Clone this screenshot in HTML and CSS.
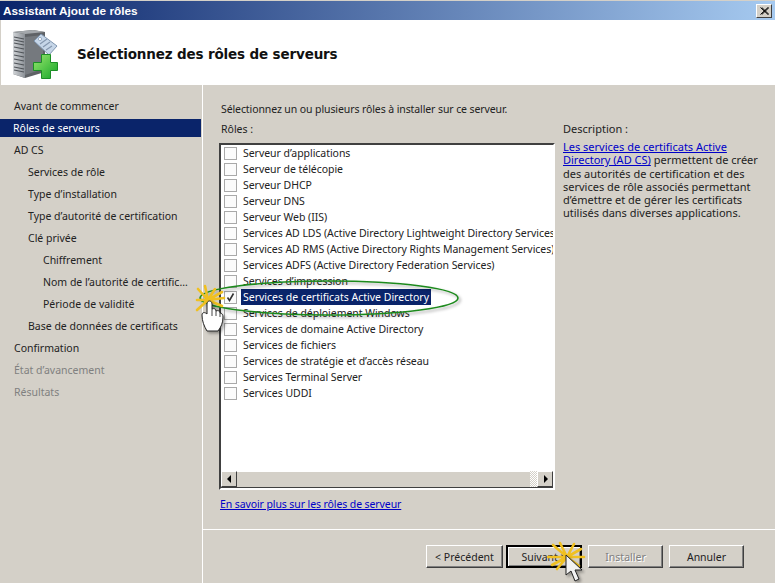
FILE: index.html
```html
<!DOCTYPE html>
<html lang="fr">
<head>
<meta charset="utf-8">
<title>Assistant Ajout de rôles</title>
<link rel="stylesheet" href="styles.css">
</head>
<body>
<div class="window">
  <div class="titlebar">
    <span class="title">Assistant Ajout de rôles</span>
    <span class="close"><svg width="9" height="8" viewBox="0 0 9 8"><path d="M0.5 0.5L8 7.5M1.8 0.5L9 7.5M8 0.5L0.5 7.5M9 0.5L1.8 7.5" stroke="#000" stroke-width="1" fill="none"/></svg></span>
  </div>
  <header class="header">
    <svg class="wizard-icon" width="48" height="50" viewBox="0 0 48 50">
      <defs>
        <linearGradient id="srv" x1="0" x2="1" y1="0" y2="0"><stop offset="0" stop-color="#d2d5d8"/><stop offset="1" stop-color="#8b9096"/></linearGradient>
        <linearGradient id="grn" x1="0" x2="1" y1="0" y2="1"><stop offset="0" stop-color="#9ae86e"/><stop offset="1" stop-color="#15a528"/></linearGradient>
      </defs>
      <path d="M0 3L20 1L32 3L32 43L12 49L0 45Z" fill="#5f6266"/>
      <path d="M0 3L12 5L12 49L0 45Z" fill="url(#srv)"/>
      <path d="M0 3L20 1L32 3L12 5Z" fill="#a4a8ac"/>
      <path d="M1 8L11 10M1 11L11 13M1 14L11 16M1 18L11 20M1 22L11 24M1 26L11 28M1 30L11 32M1 34L11 36M1 38L11 40M1 41L11 43" stroke="#4e5358" stroke-width="1.1"/>
      <path d="M12 8L30 6V40L12 46Z" fill="#75797e"/>
      <path d="M21 12L28 5L44 17L36 26Z" fill="#c6d6e8" stroke="#8096b0"/>
      <circle cx="27" cy="10" r="1.6" fill="#fff" stroke="#8096b0" stroke-width="0.7"/>
      <path d="M27 15L34 10M30 18L37 13M33 21L39 17" stroke="#8597ae" stroke-width="1.2"/>
      <path d="M28.5 25.5H37.5V33.5H44.5V41.5H37.5V49.5H28.5V41.5H20.5V33.5H28.5Z" fill="url(#grn)" stroke="#1c8f26"/>
    </svg>
    <h1 class="heading">Sélectionnez des rôles de serveurs</h1>
  </header>
  <div class="main">
    <nav class="sidebar">
      <div class="step">Avant de commencer</div>
      <div class="step current">Rôles de serveurs</div>
      <div class="step">AD CS</div>
      <div class="step sub">Services de rôle</div>
      <div class="step sub">Type d’installation</div>
      <div class="step sub">Type d’autorité de certification</div>
      <div class="step sub">Clé privée</div>
      <div class="step subsub">Chiffrement</div>
      <div class="step subsub">Nom de l’autorité de certific…</div>
      <div class="step subsub">Période de validité</div>
      <div class="step sub">Base de données de certificats</div>
      <div class="step">Confirmation</div>
      <div class="step off">État d’avancement</div>
      <div class="step off">Résultats</div>
    </nav>
    <div class="panel">
      <div class="content">
        <p class="intro">Sélectionnez un ou plusieurs rôles à installer sur ce serveur.</p>
        <div class="columns">
          <section class="roles">
            <div class="label">Rôles :</div>
            <div class="listbox">
              <ul class="rows">
                <li class="row"><span class="box"></span><span class="name">Serveur d’applications</span></li>
                <li class="row"><span class="box"></span><span class="name">Serveur de télécopie</span></li>
                <li class="row"><span class="box"></span><span class="name">Serveur DHCP</span></li>
                <li class="row"><span class="box"></span><span class="name">Serveur DNS</span></li>
                <li class="row"><span class="box"></span><span class="name">Serveur Web (IIS)</span></li>
                <li class="row"><span class="box"></span><span class="name">Services AD LDS (Active Directory Lightweight Directory Services)</span></li>
                <li class="row"><span class="box"></span><span class="name">Services AD RMS (Active Directory Rights Management Services)</span></li>
                <li class="row"><span class="box"></span><span class="name">Services ADFS (Active Directory Federation Services)</span></li>
                <li class="row"><span class="box"></span><span class="name">Services d’impression</span></li>
                <li class="row selected"><span class="box"><svg width="11" height="11" viewBox="0 0 11 11"><path d="M2.5 5.5L4.5 8.5L8.5 1.5" stroke="#333" stroke-width="1.6" fill="none"/></svg></span><span class="name">Services de certificats Active Directory</span></li>
                <li class="row"><span class="box"></span><span class="name">Services de déploiement Windows</span></li>
                <li class="row"><span class="box"></span><span class="name">Services de domaine Active Directory</span></li>
                <li class="row"><span class="box"></span><span class="name">Services de fichiers</span></li>
                <li class="row"><span class="box"></span><span class="name">Services de stratégie et d’accès réseau</span></li>
                <li class="row"><span class="box"></span><span class="name">Services Terminal Server</span></li>
                <li class="row"><span class="box"></span><span class="name">Services UDDI</span></li>
              </ul>
              <div class="hscroll">
                <span class="arrow"><svg width="5" height="8" viewBox="0 0 5 8"><path d="M4 0V8L0 4Z" fill="#000"/></svg></span>
                <span class="thumb"></span>
                <span class="hatch"></span>
                <span class="arrow"><svg width="5" height="8" viewBox="0 0 5 8"><path d="M1 0V8L5 4Z" fill="#000"/></svg></span>
              </div>
            </div>
          </section>
          <aside class="desc">
            <div class="label">Description :</div>
            <p class="desc-text"><a class="link" href="#">Les services de certificats Active Directory (AD CS)</a> permettent de créer des autorités de certification et des services de rôle associés permettant d’émettre et de gérer les certificats utilisés dans diverses applications.</p>
          </aside>
        </div>
        <a class="link more" href="#">En savoir plus sur les rôles de serveur</a>
      </div>
      <footer class="footer">
        <button class="btn prev">&lt; Précédent</button>
        <button class="btn default">Suivant &gt;</button>
        <button class="btn disabled">Installer</button>
        <button class="btn cancel">Annuler</button>
      </footer>
    </div>
  </div>
  <svg class="annotations" width="775" height="583" viewBox="0 0 775 583">
    <defs>
      <filter id="soft" x="-20%" y="-40%" width="140%" height="180%"><feDropShadow dx="2" dy="2" stdDeviation="1.5" flood-color="#000" flood-opacity="0.35"/></filter>
    </defs>
    <ellipse cx="329" cy="298" rx="129" ry="17" fill="none" stroke="#1f8a1f" stroke-width="1.6" filter="url(#soft)"/>
    <path d="M208 300L198 289M208 300L222 292M208 300L224 298M208 300L222 306M208 300L215 289M208 300L205 286M208 300L197 310M208 300L210 316M208 300L197 300" stroke="#f0c020" stroke-width="2.6" stroke-linecap="round"/>
    <path d="M207 331C204 326 202 321 202 315C202 312 205 312 207 314V304C207 300 212 300 212 304V309C214 308 216 309 216 311C218 310 220 311 220 313C222 313 223 315 223 317C223 323 221 327 218 331Z" fill="#fff" stroke="#222" stroke-width="1" filter="url(#soft)"/>
    <path d="M212 309V316M216 311V316M220 313V317" stroke="#444" stroke-width="1"/>
    <path d="M567 557L553 545M567 557L560 543M567 557L574 544M567 557L581 549M567 557L584 557M567 557L579 566M567 557L557 569M567 557L548 557M567 557L552 565" stroke="#f0c020" stroke-width="2.6" stroke-linecap="round"/>
    <path d="M566 555V575L571 571L575 581L579 579L575 570L582 570Z" fill="#f2f2f2" stroke="#222" stroke-width="1" filter="url(#soft)"/>
  </svg>
</div>
</body>
</html>
```
FILE: styles.css
```css
* { box-sizing: border-box; }
html, body { margin: 0; padding: 0; }
body { width: 775px; height: 583px; overflow: hidden; background: #d4d0c8; font-family: "Noto Sans", "Liberation Sans", sans-serif; font-size: 10.5px; color: #222; }
.window { position: relative; width: 775px; height: 583px; display: flex; flex-direction: column; }
.titlebar { flex: 0 0 20px; height: 20px; padding: 1px 3px 0 3px; display: flex; align-items: center; justify-content: space-between; background: linear-gradient(90deg, #0a246a 0%, #a6caf0 100%); border-top: 1px solid #d4d0c8; }
.title { color: #fff; font: bold 11.8px "Liberation Sans", sans-serif; }
.close { width: 16px; height: 14px; display: flex; align-items: center; justify-content: center; background: #d4d0c8; border: 1px solid; border-color: #fff #404040 #404040 #fff; }
.header { flex: 0 0 65px; height: 65px; margin-left: 1px; background: #fff; display: flex; align-items: center; padding-left: 12px; }
.wizard-icon { flex: none; margin-top: 2px; }
.heading { margin: 3px 0 0 16px; font: bold 13.5px "DejaVu Sans", sans-serif; letter-spacing: -0.15px; color: #111; }
.main { flex: 1; display: flex; min-height: 0; }
.sidebar { flex: 0 0 203px; width: 203px; padding-top: 10px; border-right: 1px solid #fff; }
.step { height: 22px; line-height: 22px; padding-left: 14px; white-space: nowrap; margin-right: 1px; }
.step.sub { padding-left: 28px; }
.step.subsub { padding-left: 43px; }
.step.off { color: #808080; }
.step.current { background: #0a246a; color: #fff; height: 18px; line-height: 18px; margin: 2px 1px 2px 0; padding-left: 13px; }
.panel { flex: 1; display: flex; flex-direction: column; min-width: 0; }
.content { flex: 0 0 444px; height: 444px; padding: 17px 0 0 16px; }
.intro { margin: 0 0 0 2px; height: 15px; line-height: 15px; letter-spacing: -0.1px; }
.columns { display: flex; margin-top: 5px; }
.label { height: 21px; line-height: 14px; padding-left: 2px; }
.roles { flex: 0 0 336px; width: 336px; }
.listbox { height: 347px; width: 336px; background: #fff; border: 2px solid; border-color: #404040 #fff #fff #404040; display: flex; flex-direction: column; }
.rows { list-style: none; margin: 0; padding: 0 0 0 3px; flex: 1; overflow: hidden; }
.row { height: 16px; display: flex; align-items: center; white-space: nowrap; letter-spacing: -0.04px; }
.box { flex: none; width: 13px; height: 13px; margin-right: 4px; background: #fbfbfb; border: 1px solid #a9a9a9; display: flex; align-items: center; justify-content: center; }
.name { padding: 0 2px; line-height: 16px; }
.row.selected { letter-spacing: 0; }
.row.selected .name { background: #0a246a; color: #fff; }
.hscroll { flex: 0 0 17px; display: flex; background: #d4d0c8; border-bottom: 1px solid #404040; }
.arrow { flex: 0 0 16px; display: flex; align-items: center; justify-content: center; border: 1px solid; border-color: #fff #404040 #404040 #fff; background: #d4d0c8; }
.thumb { flex: 1; border-top: 1px solid #fff; }
.hatch { flex: 0 0 7px; background: repeating-conic-gradient(#fff 0 25%, #d4d0c8 0 50%) 0 0 / 2px 2px; }
.desc { flex: 1; padding-left: 8px; width: 200px; }
.desc .label { padding-left: 0; height: 18px; font-size: 11px; }
.desc-text { margin: 0; width: 196px; line-height: 13.3px; font-size: 11px; }
.link { color: #0000c8; text-decoration: underline; }
.more { display: block; margin: 7px 0 0 1px; line-height: 14px; letter-spacing: -0.1px; }
.footer { flex: 1; border-top: 1px solid #fff; display: flex; padding: 15px 0 0 223px; gap: 6px; }
.btn { width: 75px; height: 23px; padding: 0; font: inherit; color: #222; background: #d4d0c8; border: 1px solid; border-color: #fff #404040 #404040 #fff; box-shadow: inset -1px -1px 0 #808080; }
.btn.prev { width: 77px; margin-right: -3px; }
.btn.default { width: 76px; border: 2px solid #000; box-shadow: inset 1px 1px 0 #fff, inset -1px -1px 0 #808080; }
.btn.disabled { color: #808080; text-shadow: 1px 1px 0 #fff; }
.annotations { position: absolute; left: 0; top: 0; pointer-events: none; }
```
